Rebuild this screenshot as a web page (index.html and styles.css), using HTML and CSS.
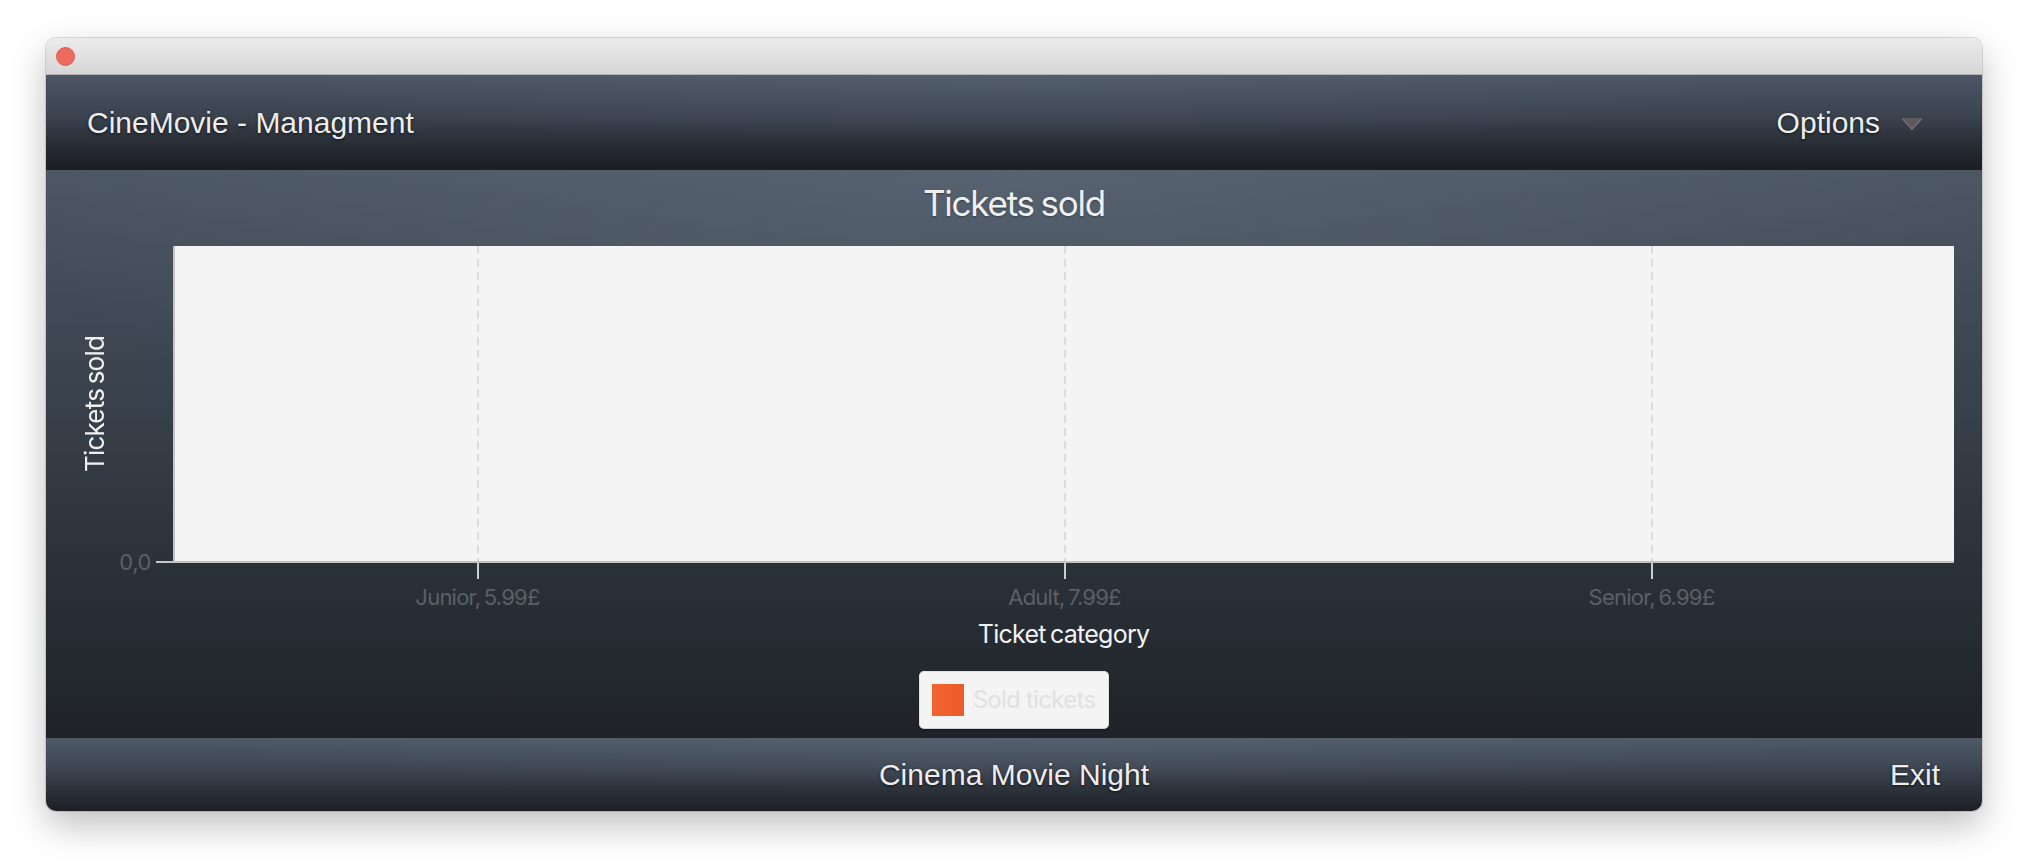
FILE: index.html
```html
<!DOCTYPE html>
<html lang="en">
<head>
<meta charset="utf-8">
<title>CineMovie - Managment</title>
<link rel="stylesheet" href="styles.css">
</head>
<body>
<div class="window">
  <div class="titlebar">
    <span class="close-btn"></span>
  </div>
  <header class="app-header">
    <span class="app-name">CineMovie - Managment</span>
    <span class="options">Options
      <svg class="caret" width="20" height="12" viewBox="0 0 20 12"><polygon points="0,0 20,0 10,11" /></svg>
    </span>
  </header>
  <section class="chart">
    <h2 class="chart-title">Tickets sold</h2>
    <div class="chart-grid">
      <div class="y-title"><span>Tickets sold</span></div>
      <div class="y-axis">
        <div class="y-tick-row"><span class="y-tick-label">0,0</span><span class="y-tick"></span></div>
      </div>
      <div class="plot">
        <div class="grid-col"><span class="vline"></span></div>
        <div class="grid-col"><span class="vline"></span></div>
        <div class="grid-col"><span class="vline"></span></div>
      </div>
      <div class="x-axis">
        <div class="x-cat"><span class="x-tick"></span><span class="x-label">Junior, 5.99£</span></div>
        <div class="x-cat"><span class="x-tick"></span><span class="x-label">Adult, 7.99£</span></div>
        <div class="x-cat"><span class="x-tick"></span><span class="x-label">Senior, 6.99£</span></div>
      </div>
      <div class="x-title">Ticket category</div>
    </div>
    <div class="legend-row">
      <div class="legend"><span class="swatch"></span><span class="legend-text">Sold tickets</span></div>
    </div>
  </section>
  <footer class="app-footer">
    <span></span>
    <span class="footer-title">Cinema Movie Night</span>
    <span class="exit">Exit</span>
  </footer>
</div>
</body>
</html>
```
FILE: styles.css
```css
html, body {
  margin: 0;
  padding: 0;
  background: #ffffff;
}
body {
  width: 2028px;
  height: 866px;
  overflow: hidden;
}
.window {
  margin: 38px 0 0 46px;
  width: 1936px;
  height: 773px;
  border-radius: 10px;
  overflow: hidden;
  display: flex;
  flex-direction: column;
  box-shadow: 0 14px 36px rgba(0,0,0,0.26), 0 0 0 1px rgba(0,0,0,0.13);
}
.titlebar {
  height: 36px;
  flex: none;
  background: linear-gradient(#ebebeb, #d6d6d6);
  border-bottom: 1px solid #b3b3b3;
  display: flex;
  align-items: center;
  padding-left: 10px;
}
.close-btn {
  width: 17px;
  height: 17px;
  border-radius: 50%;
  background: #ef6a5e;
  border: 1px solid #de5a4f;
}
.app-header {
  height: 95px;
  flex: none;
  box-sizing: border-box;
  padding: 0 60px 0 41px;
  display: flex;
  align-items: center;
  justify-content: space-between;
  background:
    radial-gradient(ellipse 60% 100% at 50% 0%, rgba(95,108,122,0.35), rgba(95,108,122,0) 70%),
    linear-gradient(#4c5664, #3a424e 45%, #252a31 78%, #1b1e22);
  font-family: "Liberation Sans", Arial, sans-serif;
  font-size: 30px;
  color: #ededed;
  text-shadow: 0 1px 3px rgba(0,0,0,0.7);
}
.options {
  display: flex;
  align-items: center;
  gap: 22px;
}
.caret {
  fill: #5b5b5b;
  filter: drop-shadow(0 1px 0 rgba(255,255,255,0.45));
  margin-top: 2px;
}
.chart {
  height: 568px;
  flex: none;
  box-sizing: border-box;
  padding-top: 11px;
  background:
    radial-gradient(ellipse 55% 55% at 50% 0%, rgba(100,114,128,0.45), rgba(100,114,128,0) 100%),
    linear-gradient(#4c5663, #39414c 40%, #2b3139 70%, #1f2328);
  font-family: Inter, "Noto Sans", sans-serif;
  letter-spacing: -0.05em;
  word-spacing: -0.12em;
}
.chart-title {
  margin: 0 0 21px;
  height: 44px;
  font-size: 35px;
  line-height: 44px;
  letter-spacing: -0.035em;
  font-weight: 400;
  text-align: center;
  color: #efefef;
  text-shadow: 0 1px 2px rgba(0,0,0,0.35);
}
.chart-grid {
  display: grid;
  grid-template-columns: 26px 65px 1781px;
  grid-template-rows: 317px auto auto;
  padding-left: 36px;
}
.y-title {
  grid-row: 1;
  grid-column: 1;
  display: flex;
  align-items: center;
  justify-content: center;
}
.y-title span {
  writing-mode: vertical-rl;
  transform: rotate(180deg);
  font-size: 26px;
  line-height: 26px;
  color: #efefef;
  white-space: nowrap;
}
.y-axis {
  grid-row: 1;
  grid-column: 2;
  display: flex;
  flex-direction: column;
  justify-content: flex-end;
  padding-bottom: 1px;
}
.y-tick-row {
  height: 0;
  display: flex;
  align-items: center;
  justify-content: flex-end;
  gap: 5px;
}
.y-tick-label {
  font-size: 22px;
  line-height: 26px;
  letter-spacing: -0.02em;
  color: #5b6066;
}
.y-tick {
  width: 17px;
  height: 2px;
  background: #c6c6c6;
}
.plot {
  grid-row: 1;
  grid-column: 3;
  box-sizing: border-box;
  background: #f4f4f4;
  border-left: 2px solid #c4c4c4;
  border-bottom: 2px solid #c4c4c4;
  display: grid;
  grid-template-columns: repeat(3, 1fr);
  padding: 0 9px;
}
.grid-col {
  display: flex;
  justify-content: center;
}
.vline {
  width: 2px;
  background: repeating-linear-gradient(to bottom, #dcdcdc 0 8px, transparent 8px 13px);
}
.x-axis {
  grid-row: 2;
  grid-column: 3;
  display: grid;
  grid-template-columns: repeat(3, 1fr);
  padding: 0 9px 0 11px;
}
.x-cat {
  display: flex;
  flex-direction: column;
  align-items: center;
}
.x-tick {
  width: 2px;
  height: 16px;
  background: #cdcdcd;
}
.x-label {
  margin-top: 5px;
  font-size: 22px;
  line-height: 26px;
  letter-spacing: -0.035em;
  color: #5b6066;
  white-space: nowrap;
}
.x-title {
  grid-row: 3;
  grid-column: 3;
  margin-top: 9px;
  text-align: center;
  font-size: 25px;
  line-height: 30px;
  letter-spacing: -0.03em;
  color: #f2f2f2;
}
.legend-row {
  display: flex;
  justify-content: center;
  margin-top: 22px;
}
.legend {
  box-sizing: border-box;
  height: 58px;
  display: flex;
  align-items: center;
  gap: 9px;
  padding: 0 13px 0 12px;
  background: #f4f4f4;
  border: 1px solid #e2e2e2;
  border-bottom-color: #d2d2d2;
  border-radius: 5px;
  box-shadow: 0 1px 2px rgba(0,0,0,0.35);
}
.swatch {
  width: 32px;
  height: 32px;
  background: linear-gradient(to right, #f2642f, #ec5b2a);
}
.legend-text {
  font-size: 24px;
  line-height: 28px;
  letter-spacing: -0.03em;
  word-spacing: 0;
  color: #e1e1e1;
}
.app-footer {
  height: 73px;
  flex: none;
  box-sizing: border-box;
  display: grid;
  grid-template-columns: 1fr auto 1fr;
  align-items: center;
  padding-right: 42px;
  background:
    radial-gradient(ellipse 60% 100% at 50% 0%, rgba(95,108,122,0.35), rgba(95,108,122,0) 70%),
    linear-gradient(#4f5a68, #3e4652 40%, #2a2f37 75%, #1c1f24);
  font-family: "Liberation Sans", Arial, sans-serif;
  font-size: 30px;
  color: #ededed;
  text-shadow: 0 1px 3px rgba(0,0,0,0.7);
}
.footer-title {
  padding-left: 42px;
}
.exit {
  justify-self: end;
}
```
